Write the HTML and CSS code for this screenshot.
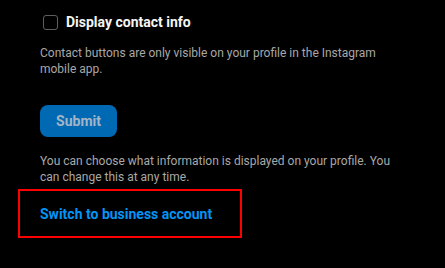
FILE: index.html
```html
<!DOCTYPE html>
<html lang="en">
<head>
  <meta charset="UTF-8" />
  <title>Edit profile</title>
  <meta name="viewport" content="width=device-width, initial-scale=1.0" />
  <link rel="stylesheet" href="styles.css">
</head>
<body>
  <div class="settings">
    <p class="hint hint-top">Show your category type on the app</p>

    <label class="check-row">
      <span class="check-box"></span>
      <span class="check-label">Display contact info</span>
    </label>
    <p class="hint hint-contact">Contact buttons are only visible on your profile in the Instagram mobile app.</p>

    <button class="submit-button" disabled>Submit</button>

    <p class="hint hint-info">You can choose what information is displayed on your profile. You can change this at any time.</p>

    <div class="switch-box">
      <a class="switch-link" href="#">Switch to business account</a>
    </div>
  </div>
</body>
</html>
```

FILE: styles.css
```css
:root {
  --bg: #000000;
  --text: #f5f5f5;
  --muted: #a8a8a8;
  --button-bg: #0069b3;
  --button-text: #a3b5c7;
  --link: #0095f6;
  --outline: #ff0000;
}

body {
  margin: 0;
  padding: 0;
  background: var(--bg);
  color: var(--text);
  font-family: 'Roboto', sans-serif;
  overflow: hidden;
}

.settings {
  display: flex;
  flex-direction: column;
  align-items: flex-start;
  padding: 0 40px 0 18px;
  margin-top: -15px;
}

.hint {
  margin: 0 0 0 22px;
  font-size: 12px;
  line-height: 16px;
  color: var(--muted);
  max-width: 352px;
}

.hint-top {
  height: 16px;
}

.check-row {
  display: flex;
  align-items: center;
  gap: 8px;
  margin: 13px 0 0 25px;
}

.check-box {
  width: 13px;
  height: 13px;
  border: 1.5px solid #5e5e5e;
  border-radius: 3px;
}

.check-label {
  font-size: 14px;
  line-height: 16px;
  font-weight: 700;
  color: var(--text);
}

.hint-contact {
  margin-top: 15px;
}

.submit-button {
  margin: 28px 0 0 22px;
  width: 77px;
  height: 32px;
  border: none;
  border-radius: 8px;
  background: var(--button-bg);
  color: var(--button-text);
  font-family: 'Roboto', sans-serif;
  font-size: 14px;
  font-weight: 700;
}

.hint-info {
  margin-top: 16px;
}

.switch-box {
  margin-top: 4px;
  width: 200px;
  height: 45px;
  border: 2px solid var(--outline);
  display: flex;
  align-items: center;
  padding-left: 20px;
}

.switch-link {
  color: var(--link);
  font-size: 14px;
  font-weight: 700;
  text-decoration: none;
}
```
